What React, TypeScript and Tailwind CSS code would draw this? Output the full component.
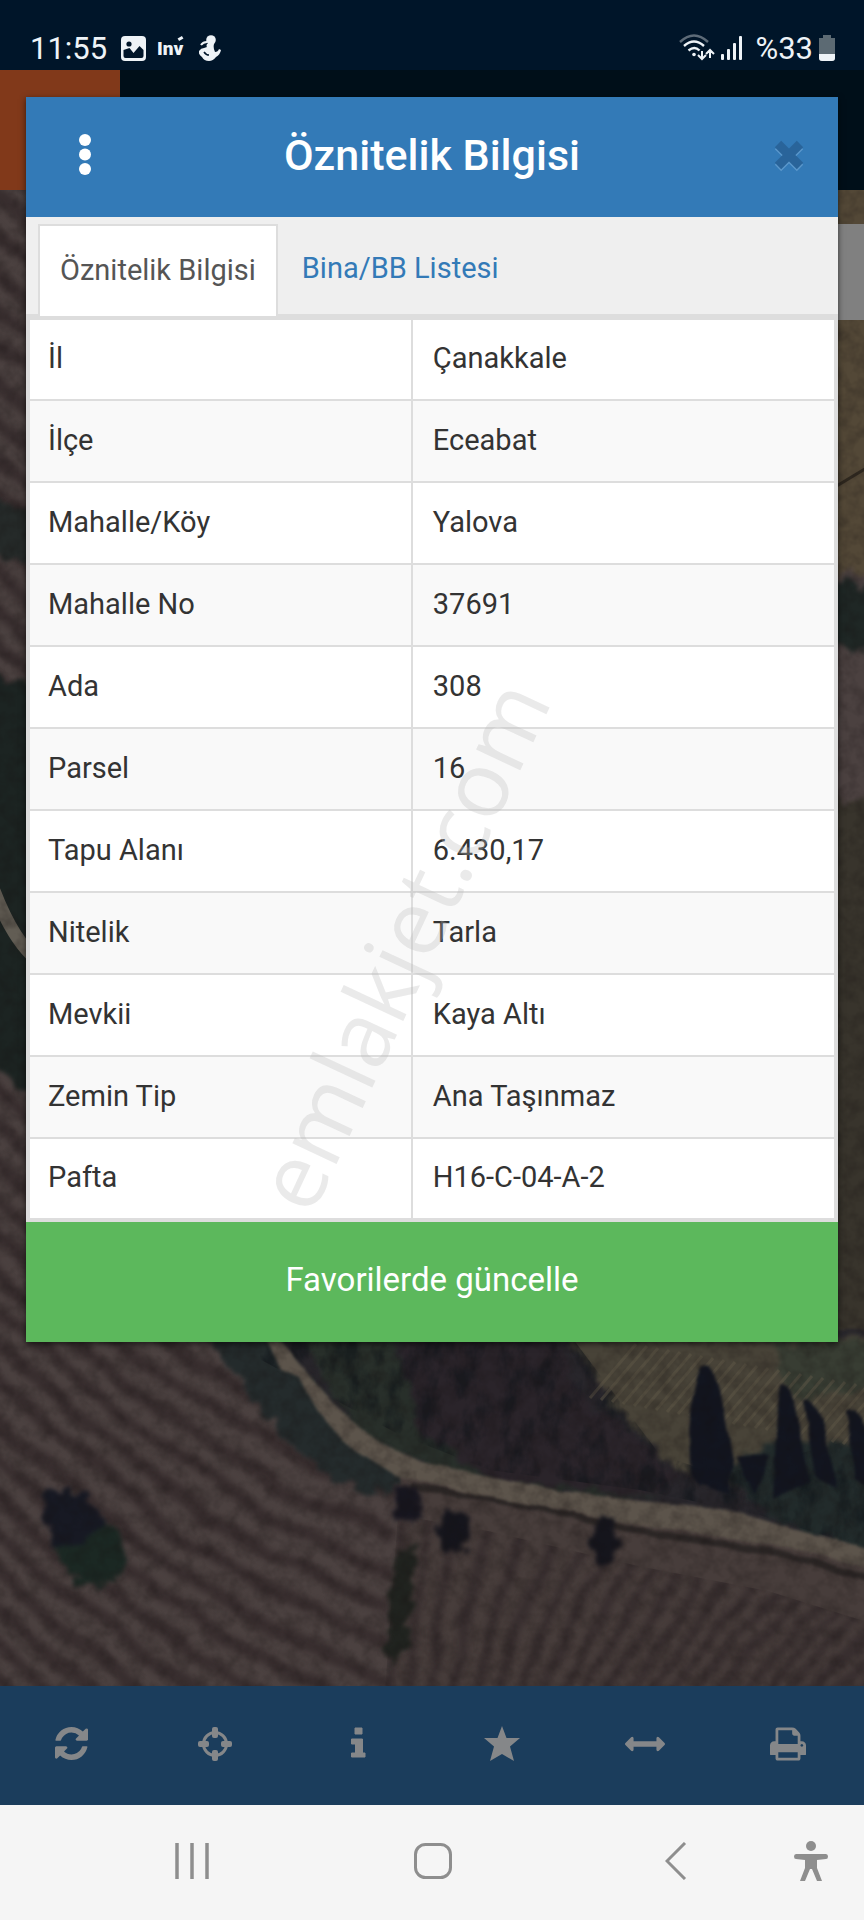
import { useState } from "react";

type IconProps = {
  className?: string;
};

const rows = [
  { label: "İl", value: "Çanakkale" },
  { label: "İlçe", value: "Eceabat" },
  { label: "Mahalle/Köy", value: "Yalova" },
  { label: "Mahalle No", value: "37691" },
  { label: "Ada", value: "308" },
  { label: "Parsel", value: "16" },
  { label: "Tapu Alanı", value: "6.430,17" },
  { label: "Nitelik", value: "Tarla" },
  { label: "Mevkii", value: "Kaya Altı" },
  { label: "Zemin Tip", value: "Ana Taşınmaz" },
  { label: "Pafta", value: "H16-C-04-A-2" },
];

const tabs = ["Öznitelik Bilgisi", "Bina/BB Listesi"];

/* ------- Toolbar icons ------- */
const RefreshIcon = ({ className }: IconProps) => (
  <svg viewBox="0 0 1536 1536" fill="currentColor" className={className}>
    <path d="M1511 928q0 5-1 7-64 268-268 434.5t-478 166.5q-146 0-282.5-55t-243.5-157l-129 129q-19 19-45 19t-45-19-19-45v-448q0-26 19-45t45-19h448q26 0 45 19t19 45-19 45l-137 137q71 66 161 102t187 36q134 0 250-65t186-179q11-17 53-117 8-23 30-23h192q13 0 22.5 9.5t9.5 22.5zm25-800v448q0 26-19 45t-45 19h-448q-26 0-45-19t-19-45 19-45l138-138q-148-137-349-137-134 0-250 65t-186 179q-11 17-53 117-8 23-30 23h-199q-13 0-22.5-9.5t-9.5-22.5v-7q65-268 270-434.5t480-166.5q146 0 284 55.5t245 156.5l130-129q19-19 45-19t45 19 19 45z" />
  </svg>
);

const TargetIcon = ({ className }: IconProps) => (
  <svg viewBox="0 0 34 34" fill="currentColor" className={className}>
    <circle cx="17" cy="17" r="11.500" fill="none" stroke="currentColor" strokeWidth="3" />
    <rect x="14" y="0" width="6" height="11" rx="2" />
    <rect x="14" y="23" width="6" height="11" rx="2" />
    <rect x="0" y="14" width="11" height="6" rx="2" />
    <rect x="23" y="14" width="11" height="6" rx="2" />
  </svg>
);

const InfoIcon = ({ className }: IconProps) => (
  <svg viewBox="0 0 34 34" fill="currentColor" className={className}>
    <path d="M14 1h7v6h-7zM10.500 12h11v14h2.500v4H10.500v-4h4v-9h-4z" stroke="currentColor" strokeLinejoin="round" />
  </svg>
);

const StarIcon = ({ className }: IconProps) => (
  <svg viewBox="0 0 36 36" fill="currentColor" className={className}>
    <path d="M18 0l4.500 12H36L26 20.500 30 35l-12-7-12 7 4-14.500L0 12h13.500z" />
  </svg>
);

const ArrowsIcon = ({ className }: IconProps) => (
  <svg viewBox="0 0 1792 1792" fill="currentColor" className={className}>
    <path d="M1792 896q0 26-19 45l-256 256q-19 19-45 19t-45-19-19-45v-128h-1024v128q0 26-19 45t-45 19-45-19l-256-256q-19-19-19-45t19-45l256-256q19-19 45-19t45 19 19 45v128h1024v-128q0-26 19-45t45-19 45 19l256 256q19 19 19 45z" />
  </svg>
);

const PrintIcon = ({ className }: IconProps) => (
  <svg viewBox="64 64 1664 1664" fill="currentColor" className={className}>
    <path d="M448 1536h896v-256h-896v256zm0-640h896v-384h-160q-40 0-68-28t-28-68v-160h-640v640zm1152 64q0-26-19-45t-45-19-45 19-19 45 19 45 45 19 45-19 19-45zm128 0v416q0 13-9.5 22.5t-22.5 9.5h-224v160q0 40-28 68t-68 28h-960q-40 0-68-28t-28-68v-160h-224q-13 0-22.5-9.5t-9.5-22.5v-416q0-79 56.5-135.5t135.5-56.5h64v-544q0-40 28-68t68-28h672q40 0 88 20t76 48l152 152q28 28 48 76t20 88v256h64q79 0 135.5 56.5t56.5 135.5z" />
  </svg>
);

const tools = [
  { name: "Yenile", icon: <RefreshIcon className="w-[33px]" /> },
  { name: "Konum", icon: <TargetIcon className="w-[34px]" /> },
  { name: "Bilgi", icon: <InfoIcon className="w-[34px]" /> },
  { name: "Favoriler", icon: <StarIcon className="w-9" /> },
  { name: "Ölçüm", icon: <ArrowsIcon className="w-10" /> },
  { name: "Yazdır", icon: <PrintIcon className="w-9" /> },
];

/* ------- Status Bar ------- */
const StatusBar = () => (
  <div className="flex h-[70px] items-center justify-between bg-[#001529] pt-[26px] pr-[29px] pl-[30px] text-[#eef3f7]">
    <div className="flex items-center">
      <span className="w-[91px] text-[31px] leading-none">11:55</span>
      <svg viewBox="0 0 25 25" className="w-[25px]">
        <rect width="25" height="25" rx="4" fill="#eef3f7" />
        <path d="M2.500 20v-6l6-2 4 5 6-7 4 4v6q0 2-2 2h-16q-2 0-2-2z" fill="#001529" />
        <circle cx="8" cy="8" r="2.600" fill="#001529" />
      </svg>
      <span className="relative ml-[11px] w-[42px] text-[19px] leading-none font-black">
        Inv
        <span className="absolute -top-0.5 left-[21px] h-[3px] w-[5px] -rotate-30 bg-[#eef3f7]"></span>
      </span>
      <svg viewBox="0 0 22 26" fill="#eef3f7" className="w-[22px]">
        <circle cx="12" cy="5" r="4.800" />
        <path d="M8 9h7q-1 4 1 8 3 0 4-3l2 1q-1 5-5 7-3 4-7 4-5 0-7-4-4-3-3-6 2-3 5-3l3-1q-1-1 0-3z" />
        <path d="M2 10q2-3 6-3" fill="none" stroke="#eef3f7" strokeWidth="2" />
        <path d="M5 17q2 3 5 3" fill="none" stroke="#001529" strokeWidth="1.500" />
      </svg>
    </div>
    <div className="flex items-center">
      <svg viewBox="0 0 36 28" fill="none" stroke="#eef3f7" strokeWidth="2.400" className="w-9">
        <path d="M1 8q14-13 28 0" stroke="#5d6b78" />
        <path d="M5 12q10-9 20 0M9.500 16.500q6-5 11 0" />
        <circle cx="15" cy="20.500" r="1.800" fill="#eef3f7" stroke="none" />
        <path d="M23 17v8m-4-4l4 4 4-4M31 24v-8m-4 4l4-4 4 4" strokeWidth="2" />
      </svg>
      <svg viewBox="0 0 22 24" fill="#eef3f7" className="ml-1.5 w-[22px]">
        <rect x="0" y="18" width="3" height="6" rx="1" />
        <rect x="6" y="13" width="3" height="11" rx="1" />
        <rect x="12" y="7" width="3" height="17" rx="1" />
        <rect x="18" y="0" width="3" height="24" rx="1" />
      </svg>
      <span className="ml-3 text-[31px] leading-none">%33</span>
      <svg viewBox="0 0 16 26" className="ml-1.5 w-4">
        <path d="M4 0h8v3h4v20q0 3-3 3H3q-3 0-3-3V3h4z" fill="#5c6a73" />
        <path d="M0 19h16v4q0 3-3 3H3q-3 0-3-3z" fill="#eef3f7" />
      </svg>
    </div>
  </div>
);

/* ------- Satellite Map ------- */
const leftFurrows = Array.from({ length: 46 }, (_, i) => 100 + i * 37);
const rightFurrows = Array.from({ length: 26 }, (_, i) => i);

const SatelliteMap = () => (
  <svg
    viewBox="0 190 864 1496"
    preserveAspectRatio="xMidYMax slice"
    className="absolute inset-0 h-full w-full"
    aria-hidden="true">
    <defs>
      <filter id="furrow" x="-5%" y="-5%" width="110%" height="110%" colorInterpolationFilters="sRGB">
        <feTurbulence type="fractalNoise" baseFrequency="0.012" numOctaves="3" seed="4" result="n" />
        <feDisplacementMap in="SourceGraphic" in2="n" scale="26" xChannelSelector="R" yChannelSelector="G" />
        <feGaussianBlur stdDeviation="3" />
      </filter>
      <filter id="soft" x="-5%" y="-5%" width="110%" height="110%" colorInterpolationFilters="sRGB">
        <feTurbulence type="fractalNoise" baseFrequency="0.03" numOctaves="2" seed="4" result="n" />
        <feDisplacementMap in="SourceGraphic" in2="n" scale="6" xChannelSelector="R" yChannelSelector="G" />
        <feGaussianBlur stdDeviation="1.500" />
      </filter>
      <filter id="rough" x="-10%" y="-10%" width="120%" height="120%" colorInterpolationFilters="sRGB">
        <feTurbulence type="fractalNoise" baseFrequency="0.07" numOctaves="3" seed="9" result="n" />
        <feDisplacementMap in="SourceGraphic" in2="n" scale="24" xChannelSelector="R" yChannelSelector="G" />
        <feGaussianBlur stdDeviation="2" />
      </filter>
      <filter id="scrub" x="0" y="0" width="100%" height="100%" colorInterpolationFilters="sRGB">
        <feTurbulence type="fractalNoise" baseFrequency="0.05 0.03" numOctaves="4" seed="2" />
        <feColorMatrix values="0 0 0 0 0.05  0 0 0 0 0.07  0 0 0 0 0.09  3 0 0 0 -1.300" result="t" />
        <feComposite in="t" in2="SourceGraphic" operator="in" />
      </filter>
      <filter id="grain" x="0" y="0" width="100%" height="100%" colorInterpolationFilters="sRGB">
        <feTurbulence type="fractalNoise" baseFrequency="0.07" numOctaves="3" seed="7" />
        <feColorMatrix values="0 0 0 0 0.08  0 0 0 0 0.06  0 0 0 0 0.06  1.600 0 0 0 -0.600" />
      </filter>
      <clipPath id="rightField">
        <path d="M398 1515l90 16 150 35 130 25 96 30v70H385z" />
      </clipPath>
    </defs>

    <rect y="190" width="864" height="1496" fill="#4b4140" />
    <g filter="url(#furrow)" fill="none" stroke="#33292a" strokeWidth="13" opacity="0.8">
      {leftFurrows.map((y) => (
        <path key={y} d={`M-60 ${y - 60}C60 ${y + 40} 180 ${y + 170} 390 ${y + 250}`} />
      ))}
    </g>

    {/* ------- Strips beside the dialog ------- */}
    <g filter="url(#rough)">
      <path d="M-20 490l70 30v50l-70-20z" fill="#252a29" />
      <path d="M-20 670l70 20v430l-70-70z" fill="#1c2422" />
      <path d="M820 180h80v400l-80-10z" fill="#534837" />
      <path d="M820 575l80 20v60l-80-10z" fill="#1f2725" />
      <path d="M820 800h80v560h-80z" fill="#38342c" />
    </g>
    <path d="M-10 880q22 62 50 82" stroke="#625d54" strokeWidth="13" fill="none" />
    <path d="M830 490l40-24" stroke="#302920" strokeWidth="3" />

    {/* ------- Scrubland above the road ------- */}
    <path d="M215 1330H880v235l-110-30-180-30-170-30-80-50z" fill="#28262b" filter="url(#soft)" />
    <g filter="url(#rough)">
      <path d="M205 1335h70l60 75 75 60-20 25-60-15-60-60z" fill="#242b2c" />
      <path d="M300 1335h90l40 100 100 30 130 30-60 5-160-25-80-40z" fill="#282f2a" />
      <path d="M400 1335h150l40 70 90 70-40 20-150-15-70-50z" fill="#2a242a" />
      <path d="M565 1335h320v190l-120-30-80-20-60-55z" fill="#484338" />
      <path d="M770 1340h110v50l-90 10z" fill="#383d33" />
      <path d="M720 1470l60-30 110 5v115l-110-35z" fill="#222b2b" />
    </g>
    <path d="M215 1335h355l90 120 60 20 150-40v115l-110-35-120-25-150-20-90-35z" filter="url(#scrub)" opacity="0.55" />
    <g stroke="#5f5747" strokeWidth="3" opacity="0.5">
      {rightFurrows.map((i) => (
        <path key={i} d={`M${590 + i * 11} ${1398 + i * 2}l46-54`} />
      ))}
    </g>
    <g fill="#12151f" filter="url(#soft)">
      <path d="M692 1475q-6-70 8-108 12-8 20 22l14 75-5 30-30-10z" />
      <path d="M773 1500l5-114q10-4 18 26l15 70z" />
      <path d="M804 1400q8-4 18 20l16 70-22-15z" />
      <path d="M845 1410q12-5 30 40v40l-20-10z" />
      <path d="M735 1455l35 0-15 40z" />
    </g>

    {/* ------- Lower field ------- */}
    <path d="M400 1475l30 0 150 30 150 25 150 30v140H390z" fill="#473d3b" filter="url(#soft)" />
    <g clipPath="url(#rightField)">
      <g filter="url(#furrow)" fill="none" stroke="#31282a" strokeWidth="9" opacity="0.7">
        {rightFurrows.map((i) => (
          <path key={i} d={`M${385 + i * 21} 1720Q${395 + i * 26} 1600 ${400 + i * 33} 1500`} />
        ))}
      </g>
    </g>
    <path d="M410 1486l110 18 130 29 120 18 100 28" stroke="#2b2625" strokeWidth="7" fill="none" filter="url(#soft)" />

    {/* ------- Road ------- */}
    <path
      d="M264 1338h14l30 36 24 28 43 38 46 22 60 12 80 17 80 10 80 7 76 22 70 18v20l-70-19-80-13-100-15-60-12-80-14-82-20-50-32-26-30-20-35-18-8z"
      fill="#5c544b"
      filter="url(#soft)"
    />

    {/* ------- Trees ------- */}
    <g filter="url(#rough)">
      <path d="M50 1500q18-20 34 2l38 30q8 36-18 54-32 4-44-30-18-30-10-56z" fill="#1b2823" />
      <path d="M46 1496q20-18 40 2l22 26-24 20-32 6q-12-28-6-54z" fill="#171923" />
      <ellipse cx="406" cy="1504" rx="14" ry="19" fill="#17161f" />
      <path d="M398 1547h18l-8 95-22 28 6-70z" fill="#20231f" />
      <ellipse cx="453" cy="1534" rx="15" ry="22" fill="#15151c" />
      <ellipse cx="604" cy="1542" rx="13" ry="23" fill="#15151c" />
    </g>
    <rect y="190" width="864" height="1496" filter="url(#grain)" opacity="0.35" />
  </svg>
);

/* ------- Attribute Dialog ------- */
const AttributeDialog = () => {
  const [activeTab, setActiveTab] = useState(tabs[0]);

  return (
    <div
      role="dialog"
      aria-labelledby="dialog-title"
      className="absolute inset-x-[26px] top-[97px] bg-[#efefef] shadow-[0_2px_6px_rgba(0,0,0,0.6)]">
      <div className="flex h-[120px] items-center justify-between bg-[#337ab7] pr-3 pb-1 pl-8">
        <button aria-label="Menü" className="flex h-16 w-[54px] items-center justify-center">
          <svg viewBox="0 0 12 42" fill="white" className="h-[42px] w-3">
            <circle cx="6" cy="6" r="6" />
            <circle cx="6" cy="20.500" r="6" />
            <circle cx="6" cy="35" r="6" />
          </svg>
        </button>
        <h2 id="dialog-title" className="text-[43px] leading-none font-medium text-white">
          Öznitelik Bilgisi
        </h2>
        <button aria-label="Kapat" className="flex h-16 w-[74px] items-center justify-center">
          <svg viewBox="0 0 32 34" fill="none" strokeWidth="9" className="w-8">
            <path d="M5 8l22 22M27 8L5 30" stroke="#5a97cb" />
            <path d="M5 6l22 22M27 6L5 28" stroke="#29649a" />
          </svg>
        </button>
      </div>

      <div role="tablist" className="flex h-[99px] border-b-2 border-[#ddd] pt-[7px] pl-3">
        {tabs.map((tab) => (
          <button
            key={tab}
            role="tab"
            aria-selected={tab === activeTab}
            onClick={() => setActiveTab(tab)}
            className={
              tab === activeTab
                ? "-mb-0.5 border-2 border-b-0 border-[#ddd] bg-white px-5 text-[29px] text-[#555]"
                : "px-6 text-[29px] text-[#337ab7]"
            }>
            {tab}
          </button>
        ))}
      </div>

      <table className="w-full table-fixed border-collapse border-4 border-[#ddd] bg-white text-[29px] leading-none text-[#333]">
        <colgroup>
          <col className="w-[47.500%]" />
          <col />
        </colgroup>
        <tbody>
          {rows.map((row) => (
            <tr key={row.label} className="h-[82px] even:bg-[#f9f9f9]">
              <th scope="row" className="border-2 border-[#ddd] px-[18px] pb-0.5 text-left font-normal">
                {row.label}
              </th>
              <td className="border-2 border-[#ddd] px-5 pb-0.5">{row.value}</td>
            </tr>
          ))}
        </tbody>
      </table>

      <button className="h-[120px] w-full bg-[#5cb85c] pb-1 text-[33px] text-white">
        Favorilerde güncelle
      </button>

      {/* ------- Watermark ------- */}
      <div className="pointer-events-none absolute inset-0 flex items-center justify-center overflow-hidden pt-[450px] pr-[62px]">
        <span className="-rotate-[65deg] font-['Open_Sans',sans-serif] text-[91px] leading-none text-[#b8b8b8]/30">
          emlakjet.com
        </span>
      </div>
    </div>
  );
};

/* ------- System Navigation ------- */
const SystemNav = () => (
  <nav className="grid h-[115px] grid-cols-[172fr_40px_201fr_40px_203fr_40px_95fr_40px_33fr] items-center bg-[#f5f5f5] pb-1 text-[#8e8e8e]">
    <button aria-label="Son uygulamalar" className="col-start-2 flex justify-center">
      <svg viewBox="0 0 34 36" fill="none" stroke="currentColor" strokeWidth="3.500" className="h-9">
        <path d="M2 0v36M17 0v36M32 0v36" />
      </svg>
    </button>
    <button aria-label="Ana ekran" className="col-start-4 flex justify-center">
      <svg viewBox="0 0 38 36" fill="none" stroke="currentColor" strokeWidth="3" className="h-9">
        <rect x="1.500" y="1.500" width="35" height="33" rx="10" />
      </svg>
    </button>
    <button aria-label="Geri" className="col-start-6 flex justify-center">
      <svg viewBox="0 0 22 38" fill="none" stroke="currentColor" strokeWidth="3" className="h-[38px]">
        <path d="M20 1L2 19l18 18" />
      </svg>
    </button>
    <button aria-label="Erişilebilirlik" className="col-start-8 flex justify-center">
      <svg viewBox="0 0 34 40" fill="currentColor" className="h-10">
        <circle cx="17" cy="5" r="5" />
        <path d="M2 13h30q2 0 2 2.500T32 18l-9 1v8l5 13h-5l-5-12h-2l-5 12H6l5-13v-8l-9-1q-2 0-2-2.500T2 13z" />
      </svg>
    </button>
  </nav>
);

const App = () => {
  return (
    <div className="relative flex min-h-screen flex-col bg-[#000f19] font-[Roboto,sans-serif]">
      <StatusBar />
      <header className="h-[120px] bg-[#000f19]">
        <div className="h-full w-[120px] bg-[#81391a]"></div>
      </header>

      <main className="relative flex min-h-[1200px] flex-1 justify-end overflow-hidden">
        <SatelliteMap />
        <div className="relative mt-[34px] h-24 w-[120px] bg-[#808080]"></div>
      </main>

      <div className="grid h-[119px] grid-cols-6 bg-[#1b3d5c] pr-1 pb-1 text-[#858789]">
        {tools.map((tool) => (
          <button key={tool.name} aria-label={tool.name} className="flex items-center justify-center">
            {tool.icon}
          </button>
        ))}
      </div>
      <SystemNav />

      <AttributeDialog />
    </div>
  );
};

export default App;
